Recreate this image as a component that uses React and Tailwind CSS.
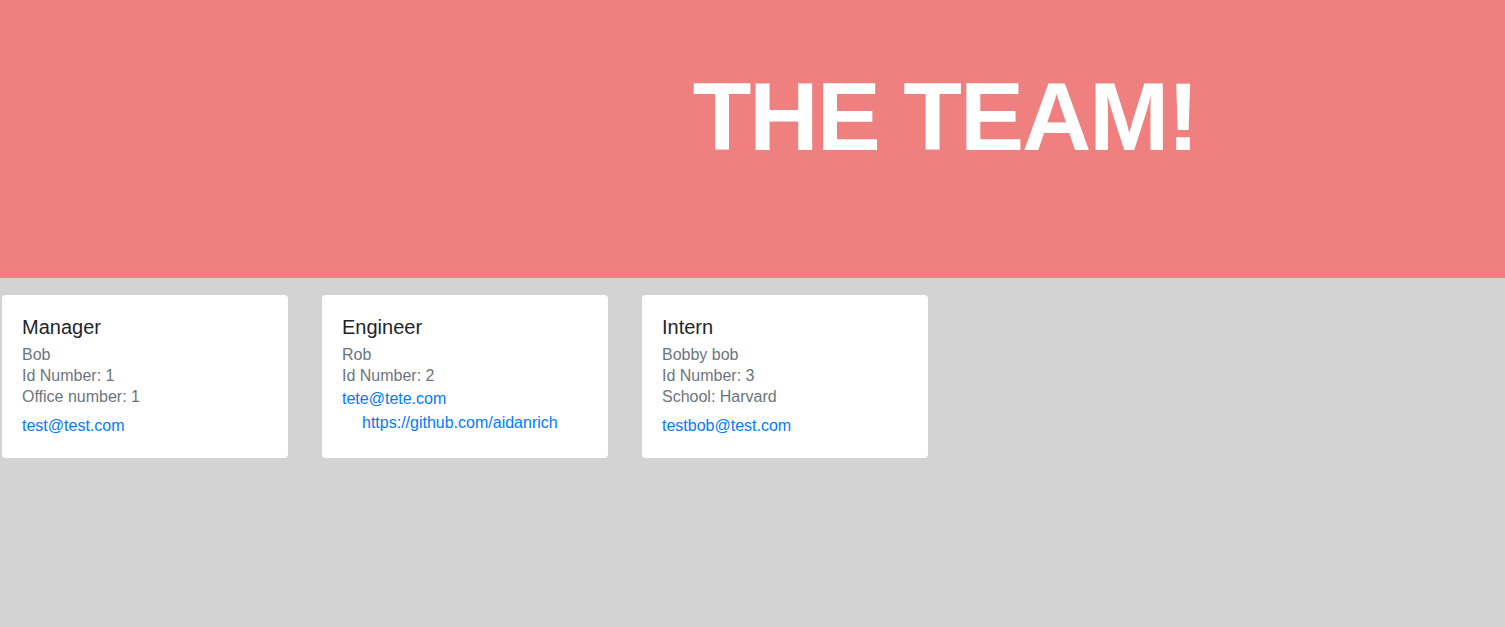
import React from 'react'

const cards = [
  {
    role: 'Manager',
    name: 'Bob',
    lines: ['Id Number: 1', 'Office number: 1'],
    email: 'test@test.com',
  },
  {
    role: 'Engineer',
    name: 'Rob',
    lines: ['Id Number: 2'],
    email: 'tete@tete.com',
    github: 'https://github.com/aidanrich',
  },
  {
    role: 'Intern',
    name: 'Bobby bob',
    lines: ['Id Number: 3', 'School: Harvard'],
    email: 'testbob@test.com',
  },
]

const Card = ({ card }) => {
  return (
    <div className="w-[286px] bg-white rounded-[4px] px-5 pt-5 pb-[22px]">
      <h5 className="text-[20px] leading-[24px] text-[#212529] mb-[5px]">{card.role}</h5>
      <div className="text-[16px] leading-[21px] text-[#6c757d]">
        <div>{card.name}</div>
        {card.lines.map((l) => (
          <div key={l}>{l}</div>
        ))}
      </div>
      {card.github ? (
        <>
          <a href="#" className="block text-[16px] leading-[21px] text-[#007bff] mt-[2px]">
            {card.email}
          </a>
          <a href="#" className="block text-[16px] leading-[21px] text-[#007bff] mt-[3px] pl-5">
            {card.github}
          </a>
        </>
      ) : (
        <a href="#" className="block text-[16px] leading-[21px] text-[#007bff] mt-2">
          {card.email}
        </a>
      )}
    </div>
  )
}

export default function App() {
  return (
    <div className="min-h-screen bg-[#d3d3d3] font-['Liberation_Sans',Arial,sans-serif]">
      <header className="h-[278px] bg-[#f08080] flex justify-center pl-[385px]">
        <h1 className="mt-[62px] text-[96px] leading-[110px] tracking-[-2px] font-bold text-white">THE TEAM!</h1>
      </header>
      <main className="flex gap-[34px] pt-[17px] pl-[2px]">
        {cards.map((c) => (
          <Card key={c.role} card={c} />
        ))}
      </main>
    </div>
  )
}
